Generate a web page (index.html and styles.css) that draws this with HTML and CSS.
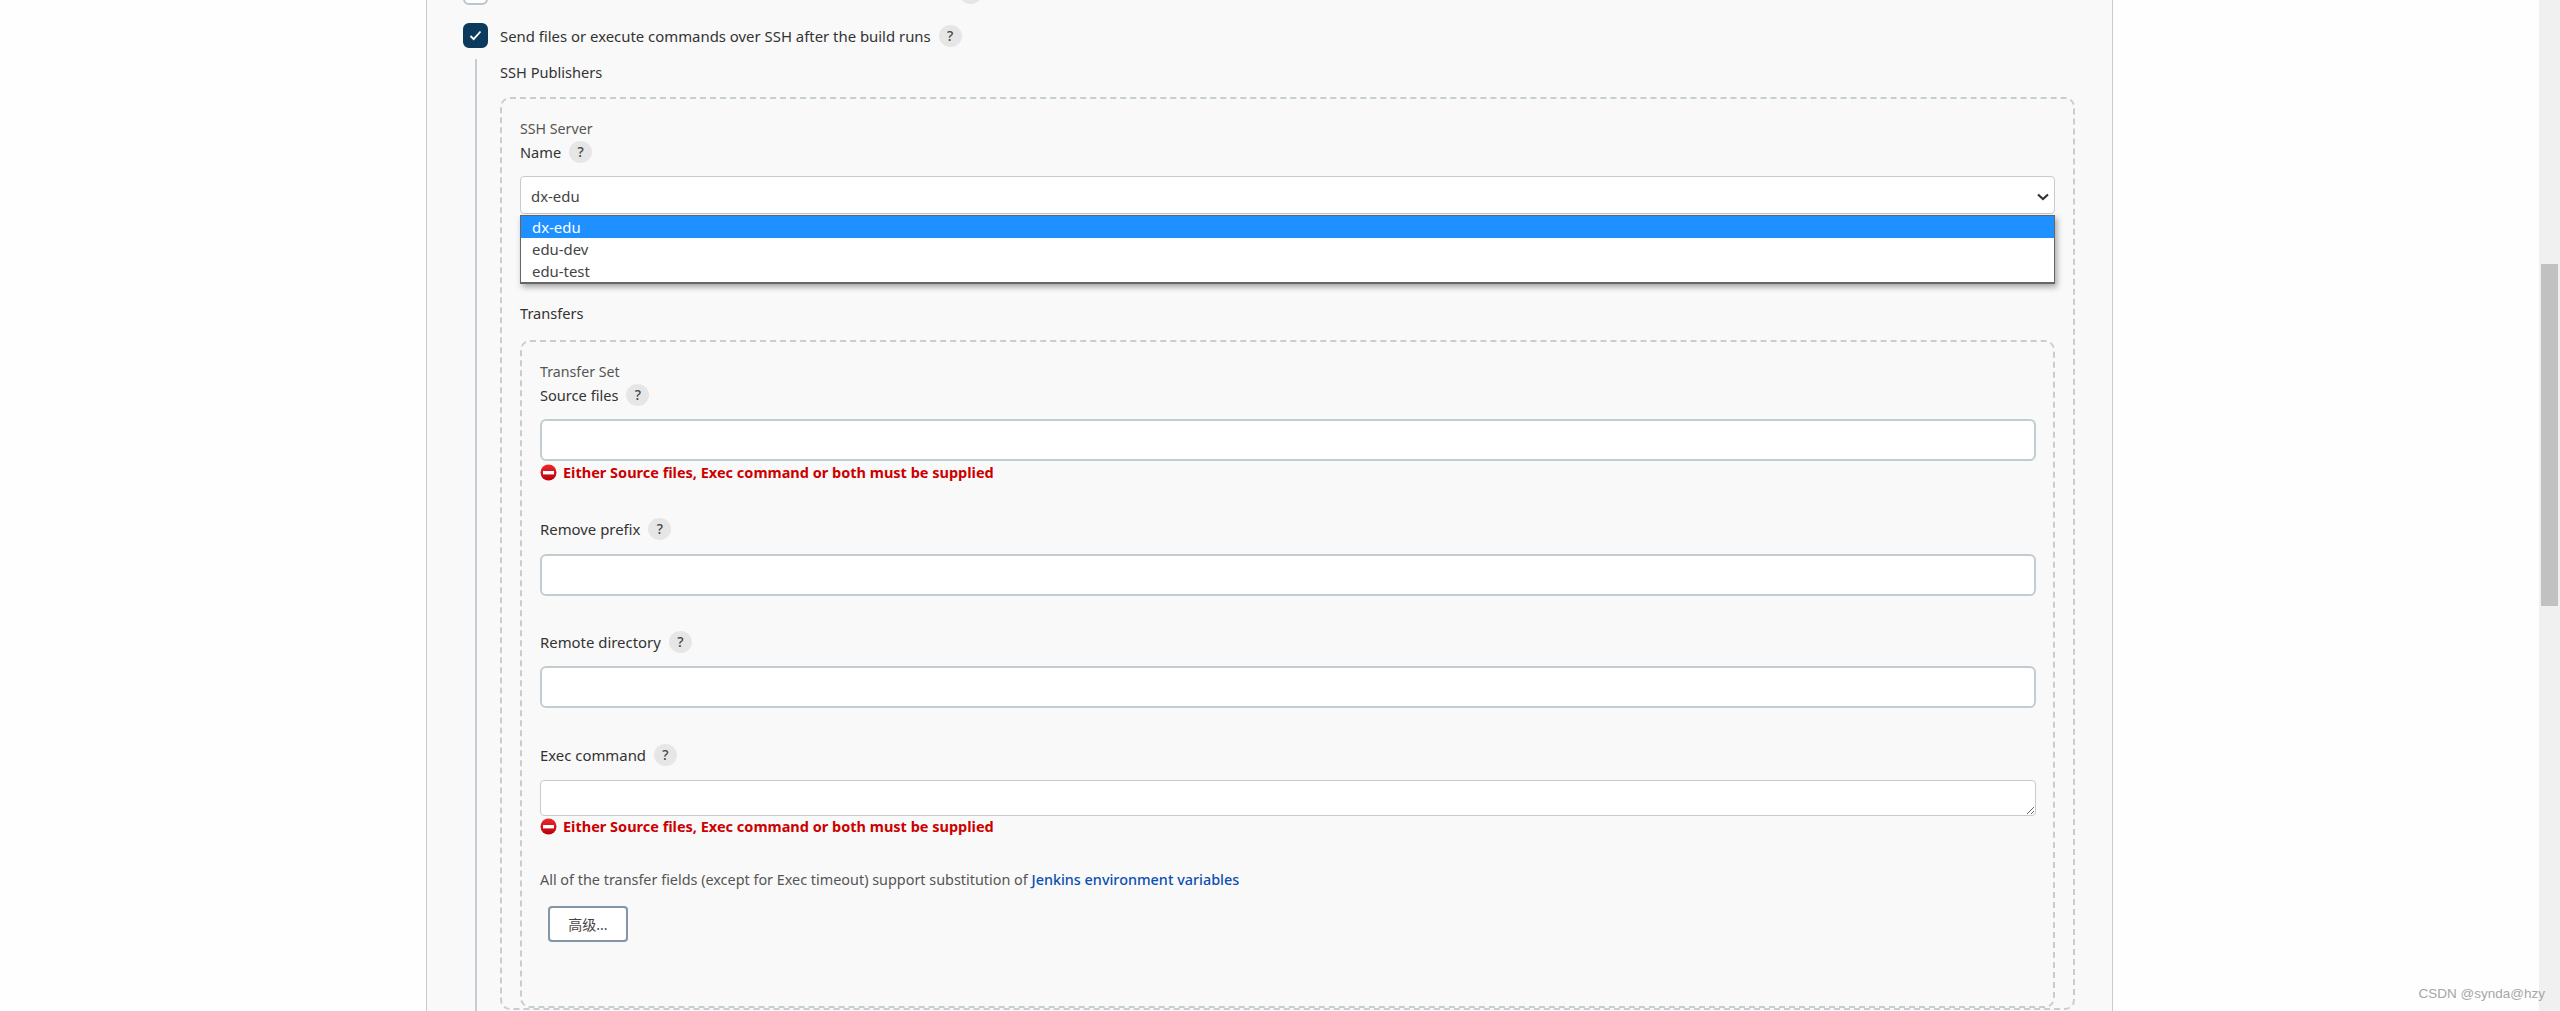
FILE: index.html
```html
<!DOCTYPE html>
<html>
<head>
    <meta charset="UTF-8">
    <title>Jenkins</title>
    <link rel="stylesheet" href="styles.css">
</head>
<body>
    <div class="page">
        <div class="panel">
            <!-- Fila anterior, cortada por el borde superior -->
            <div class="cut-row">
                <span class="checkbox"></span>
                <span class="help cut-help"></span>
            </div>

            <div class="check-row">
                <span class="checkbox checked">
                    <svg width="13" height="11" viewBox="0 0 13 11"><path d="M1.5 6l3.2 3.2 6.8-7.7" fill="none" stroke="#fff" stroke-width="1.8"/></svg>
                </span>
                <label class="check-label">Send files or execute commands over SSH after the build runs</label>
                <span class="help">?</span>
            </div>

            <div class="section">
                <div class="section-title">SSH Publishers</div>

                <div class="repeat outer">
                    <div class="repeat-title">SSH Server</div>
                    <div class="field-label"><span class="strong">Name</span><span class="help">?</span></div>

                    <div class="select-wrap">
                        <select class="select"><option>dx-edu</option></select>
                        <svg class="chevron" width="12" height="8" viewBox="0 0 12 8"><path d="M1 1.5l5 4.5 5-4.5" fill="none" stroke="#333" stroke-width="2.2"/></svg>
                        <ul class="dropdown">
                            <li class="selected">dx-edu</li>
                            <li>edu-dev</li>
                            <li>edu-test</li>
                        </ul>
                    </div>

                    <div class="section-title transfers">Transfers</div>

                    <div class="repeat inner">
                        <div class="repeat-title">Transfer Set</div>

                        <div class="field-label"><span class="strong">Source files</span><span class="help">?</span></div>
                        <input class="text-input" type="text">
                        <div class="error">
                            <svg width="17" height="17" viewBox="0 0 17 17"><circle cx="8.5" cy="8.5" r="8" fill="url(#redball)"/><rect x="3" y="7" width="11" height="3.4" fill="#fff"/><defs><linearGradient id="redball" x1="0" y1="0" x2="0" y2="1"><stop offset="0" stop-color="#ee2a2a"/><stop offset="1" stop-color="#b8000c"/></linearGradient></defs></svg>
                            Either Source files, Exec command or both must be supplied
                        </div>

                        <div class="field-label spaced wide"><span>Remove prefix</span><span class="help">?</span></div>
                        <input class="text-input loose" type="text">

                        <div class="field-label spaced"><span>Remote directory</span><span class="help">?</span></div>
                        <input class="text-input" type="text">

                        <div class="field-label spaced wide"><span>Exec command</span><span class="help">?</span></div>
                        <textarea class="text-area"></textarea>
                        <div class="error no-gap">
                            <svg width="17" height="17" viewBox="0 0 17 17"><circle cx="8.5" cy="8.5" r="8" fill="url(#redball)"/><rect x="3" y="7" width="11" height="3.4" fill="#fff"/></svg>
                            Either Source files, Exec command or both must be supplied
                        </div>

                        <div class="info">All of the transfer fields (except for Exec timeout) support substitution of <a href="#">Jenkins environment variables</a></div>
                        <button class="advanced">高级...</button>
                    </div>
                </div>
            </div>
        </div>
    </div>

    <div class="scrollbar"><div class="thumb"></div></div>
    <div class="watermark">CSDN @synda@hzy</div>
</body>
</html>
```

FILE: styles.css
```css
/* Estilos generales */
html, body {
    height: 1011px;
    overflow: hidden;
}

body {
    margin: 0;
    display: flex;
    background-color: #fefefe;
    color: #333;
    font-family: "Noto Sans", "Noto Sans CJK SC", sans-serif;
    font-size: 14.9px;
}

.page {
    flex: 1;
    padding: 0 426px;
    height: 1011px;
}

.panel {
    height: 1011px;
    padding: 0 37px 0 36px;
    background-color: #f9f9f9;
    border-left: 1px solid #c5cdd2;
    border-right: 1px solid #c5cdd2;
}

/* Casillas */
.cut-row {
    height: 5px;
    overflow: hidden;
    display: flex;
    align-items: flex-end;
}

.check-row {
    display: flex;
    align-items: center;
    margin-top: 18px;
}

.checkbox {
    flex: none;
    width: 25px;
    height: 25px;
    box-sizing: border-box;
    border: 2px solid #bcc5cb;
    border-radius: 6px;
    background-color: #fff;
    display: flex;
    align-items: center;
    justify-content: center;
}

.checkbox.checked {
    background-color: #0b3a5c;
    border-color: #0b3a5c;
}

.check-label {
    margin-left: 12px;
}

.help {
    flex: none;
    width: 23px;
    height: 22px;
    margin-left: 8px;
    border-radius: 50%;
    background-color: #e6e6e6;
    color: #444;
    font-size: 14px;
    font-weight: 500;
    line-height: 22px;
    text-align: center;
}

.cut-help {
    margin-left: 471px;
    margin-bottom: 1px;
}

/* Bloques anidados */
.section {
    margin: 11px 0 0 12px;
    padding-left: 23px;
    height: 1100px;
    border-left: 2px solid #c5cdd2;
}

.section-title {
    font-size: 14.6px;
    font-weight: 450;
    line-height: 26px;
}

.section-title.transfers {
    margin-top: 86px;
}

.repeat {
    border: 2px dashed #c5ced3;
    border-radius: 10px;
}

.outer {
    margin-top: 12px;
    padding: 20px 18px 0;
}

.inner {
    margin-top: 14px;
    padding: 20px 17px 64px 18px;
}

.repeat-title {
    color: #555;
    font-size: 14.2px;
    line-height: 20px;
}

.field-label {
    display: flex;
    align-items: center;
    height: 22px;
    margin-top: 2px;
}

.field-label.spaced {
    margin-top: 35px;
}

.field-label.wide {
    margin-top: 36px;
}

.strong {
    font-size: 14.6px;
    font-weight: 450;
}

/* Controles */
.select-wrap {
    position: relative;
    margin-top: 13px;
}

.select {
    display: block;
    width: 100%;
    height: 38px;
    padding: 1px 10px 0;
    border: 1px solid #c3ccd1;
    border-radius: 4px;
    background-color: #fff;
    color: #444;
    font: inherit;
    appearance: none;
}

.chevron {
    position: absolute;
    top: 17px;
    right: 6px;
}

.dropdown {
    position: absolute;
    top: 39px;
    left: 0;
    right: 0;
    margin: 0;
    padding: 0;
    list-style: none;
    background-color: #fff;
    border: 1px solid #666;
    border-bottom-width: 2px;
    box-shadow: 2px 3px 6px rgba(0, 0, 0, 0.35);
}

.dropdown li {
    height: 22px;
    padding-left: 11px;
    line-height: 22px;
    color: #444;
}

.dropdown li.selected {
    background-color: #1e90ff;
    color: #fff;
}

.text-input {
    display: block;
    width: 100%;
    height: 42px;
    margin-top: 13px;
    box-sizing: border-box;
    border: 2px solid #c3ccd1;
    border-radius: 6px;
    background-color: #fff;
}

.text-input.loose {
    margin-top: 14px;
}

.text-area {
    display: block;
    width: 100%;
    height: 36px;
    margin-top: 14px;
    box-sizing: border-box;
    border: 1px solid #c3ccd1;
    border-radius: 4px;
    background-color: #fff;
}

.error {
    display: flex;
    align-items: center;
    gap: 6px;
    height: 20px;
    margin-top: 1px;
    color: #cc0000;
    font-size: 14.5px;
    font-weight: 700;
}

.error.no-gap {
    margin-top: 0;
}

.info {
    margin-top: 34px;
    color: #555;
    font-size: 14.4px;
    line-height: 20px;
}

.info a {
    color: #0b4fb0;
    font-weight: 500;
    text-decoration: none;
}

.advanced {
    display: block;
    width: 80px;
    height: 36px;
    margin: 16px 0 0 8px;
    border: 2px solid #8296a8;
    border-radius: 4px;
    background-color: #fff;
    color: #444;
    font-family: inherit;
    font-size: 14px;
}

/* Barra de desplazamiento y marca de agua */
.scrollbar {
    flex: none;
    width: 21px;
    height: 1011px;
    background-color: #f0f0f0;
}

.thumb {
    height: 342px;
    margin: 264px 2px 0;
    background-color: #c1c1c1;
}

.watermark {
    position: absolute;
    right: 15px;
    top: 985px;
    color: #a6a6a6;
    font-family: "Liberation Sans", sans-serif;
    font-size: 13.5px;
    line-height: 18px;
}
```
